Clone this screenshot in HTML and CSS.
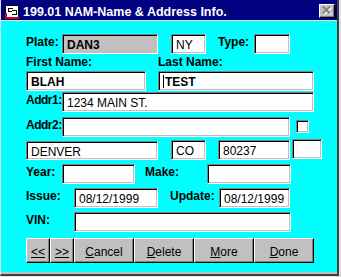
FILE: index.html
```html
<!DOCTYPE html>
<html lang="en">
<head>
    <meta charset="UTF-8">
    <title>199.01 NAM-Name &amp; Address Info.</title>
    <link rel="stylesheet" href="styles.css">
</head>
<body>

    <div class="window">
        <div class="titlebar">
            <svg class="app-icon" width="14" height="14" viewBox="0 0 14 14">
                <rect x="0.5" y="0.5" width="13" height="12" fill="#fff" stroke="#000"/>
                <path d="M1 14V8M0 13H14" stroke="#e00000" stroke-width="2"/>
                <path d="M3 3.5H8M3.5 3V7M3 6.5H7M7 5.5H11.5M11.5 5V9.5M7 9.5H12" stroke="#000"/>
            </svg>
            <span class="title">199.01 NAM-Name &amp; Address Info.</span>
            <span class="close-btn">
                <svg width="14" height="12" viewBox="0 0 14 12">
                    <path d="M4 2.5L11 9.5M11 2.5L4 9.5" stroke="#fff" stroke-width="1.8"/>
                    <path d="M3 1.5L10 8.5M10 1.5L3 8.5" stroke="#808080" stroke-width="1.8"/>
                </svg>
            </span>
        </div>

        <div class="client">
            <div class="row">
                <span class="lbl lbl-short">Plate:</span>
                <div class="field readonly bold plate">DAN3</div>
                <div class="field state">NY</div>
                <span class="lbl lbl-short type-lbl">Type:</span>
                <div class="field type"></div>
            </div>

            <div class="row names-lbl">
                <span class="lbl first-lbl">First Name:</span>
                <span class="lbl">Last Name:</span>
            </div>

            <div class="row">
                <div class="field bold first">BLAH</div>
                <div class="field bold last"><span class="caret"></span>TEST</div>
            </div>

            <div class="row addr1-row">
                <span class="lbl lbl-short tight">Addr1:</span>
                <div class="field addr1">1234 MAIN ST.</div>
            </div>

            <div class="row addr2-row">
                <span class="lbl lbl-short tight">Addr2:</span>
                <div class="field addr2"></div>
                <div class="check"></div>
            </div>

            <div class="row city-row">
                <div class="field city">DENVER</div>
                <div class="field state">CO</div>
                <div class="field zip">80237</div>
                <div class="field zip-ext"></div>
            </div>

            <div class="row gap-row">
                <span class="lbl lbl-short">Year:</span>
                <div class="field year"></div>
                <span class="lbl make-lbl">Make:</span>
                <div class="field make"></div>
            </div>

            <div class="row gap-row">
                <span class="lbl lbl-long">Issue:</span>
                <div class="field date">08/12/1999</div>
                <span class="lbl update-lbl">Update:</span>
                <div class="field date update">08/12/1999</div>
            </div>

            <div class="row gap-row">
                <span class="lbl lbl-long">VIN:</span>
                <div class="field vin"></div>
            </div>

            <div class="buttons">
                <button class="btn btn-nav"><u>&lt;&lt;</u></button>
                <button class="btn btn-nav"><u>&gt;&gt;</u></button>
                <button class="btn"><u>C</u>ancel</button>
                <button class="btn"><u>D</u>elete</button>
                <button class="btn"><u>M</u>ore</button>
                <button class="btn"><u>D</u>one</button>
            </div>
        </div>
    </div>

</body>
</html>
```

FILE: styles.css
```css
* {
    box-sizing: border-box;
}

body {
    margin: 0;
    background: #e0e0e0;
    font-family: "Liberation Sans", Arial, sans-serif;
    font-size: 12px;
}

.window {
    width: 339px;
    border-left: 1px solid #dfdfdf;
    border-right: 2px solid #404040;
    border-bottom: 2px solid #404040;
    background: #00ffff;
}

/* title bar */
.titlebar {
    height: 21px;
    background: #000080;
    border-bottom: 1px solid #dfdfdf;
    display: flex;
    align-items: flex-start;
}

.app-icon {
    margin: 5px 0 0 4px;
    flex: none;
}

.title {
    margin-left: 4px;
    padding-top: 5px;
    color: #fff;
    font-weight: bold;
    font-size: 12.5px;
    line-height: 14px;
    white-space: nowrap;
}

.close-btn {
    margin: 4px 2px 0 auto;
    width: 16px;
    height: 14px;
    background: #c0c0c0;
    border: 1px solid;
    border-color: #fff #000 #000 #fff;
    box-shadow: inset -1px -1px 0 #808080;
    display: flex;
}

/* form area */
.client {
    height: 253px;
    border-bottom: 2px solid #c0c0c0;
    padding: 13px 0 0 25px;
}

.row {
    display: flex;
    height: 20px;
}

.names-lbl {
    height: 17px;
}

.addr1-row {
    margin-top: 1px;
}

.addr2-row {
    margin-top: 5px;
}

.city-row {
    margin-top: 3px;
}

.gap-row {
    margin-top: 4px;
}

.lbl {
    flex: none;
    font-weight: bold;
    line-height: 14px;
    padding-top: 1px;
    white-space: nowrap;
    color: #000;
}

.lbl-short { width: 36px; }
.lbl-long { width: 48px; }
.tight { letter-spacing: -0.5px; }
.type-lbl { margin-left: 12px; }
.first-lbl { width: 132px; }
.make-lbl { margin-left: 10px; width: 62px; }
.update-lbl { margin-left: 12px; width: 49px; }

.field {
    flex: none;
    height: 20px;
    background: #fff;
    border: 1px solid;
    border-color: #808080 #fff #fff #808080;
    box-shadow: inset 1px 1px 0 #000, inset -1px -1px 0 #c0c0c0;
    padding: 3px 4px 0;
    line-height: 14px;
    white-space: nowrap;
    overflow: hidden;
    color: #000;
}

.readonly {
    background: #c0c0c0;
}

.bold {
    font-weight: bold;
}

.caret {
    display: inline-block;
    width: 1px;
    height: 13px;
    background: #000;
    margin-right: 1px;
    vertical-align: -2px;
}

.plate { width: 96px; }
.state { width: 35px; margin-left: 13px; }
.type { width: 36px; }
.first { width: 120px; }
.last { width: 156px; margin-left: 12px; }
.addr1 { width: 252px; }
.addr2 { width: 228px; }
.city { width: 132px; height: 19px; margin-top: 1px; }
.zip { width: 72px; margin-left: 12px; }
.zip-ext { width: 30px; margin-left: 2px; margin-top: -1px; }
.year { width: 73px; }
.make { width: 84px; }
.date { width: 84px; }
.update { width: 71px; }
.vin { width: 217px; }

.check {
    flex: none;
    width: 13px;
    height: 13px;
    margin: 3px 0 0 6px;
    background: #fff;
    border: 1px solid;
    border-color: #808080 #fff #fff #808080;
    box-shadow: inset 1px 1px 0 #000, inset -1px -1px 0 #c0c0c0;
}

/* buttons */
.buttons {
    display: flex;
    margin-top: 6px;
}

.btn {
    width: 60px;
    height: 25px;
    margin: 0;
    padding: 2px 0 0;
    background: #c0c0c0;
    border: 1px solid;
    border-color: #fff #000 #000 #fff;
    box-shadow: inset -1px -1px 0 #808080;
    font-family: "Liberation Sans", Arial, sans-serif;
    font-size: 12px;
    line-height: 14px;
    color: #000;
}

.btn-nav {
    width: 24px;
}
```
